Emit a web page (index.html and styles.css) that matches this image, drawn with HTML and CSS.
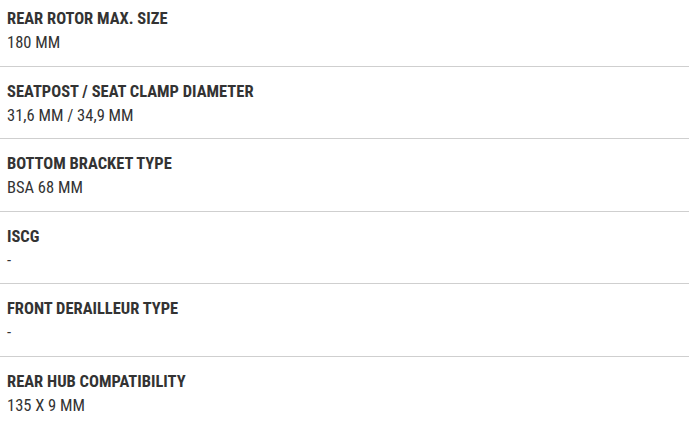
FILE: index.html
```html
<!DOCTYPE html>
<html>
<head>
<meta charset="utf-8">
<link rel="stylesheet" href="styles.css">
</head>
<body>
<div class="specs">
  <div class="row"><div class="label">REAR ROTOR MAX. SIZE</div><div class="value">180 MM</div></div>
  <div class="row"><div class="label">SEATPOST / SEAT CLAMP DIAMETER</div><div class="value">31,6 MM / 34,9 MM</div></div>
  <div class="row"><div class="label">BOTTOM BRACKET TYPE</div><div class="value">BSA 68 MM</div></div>
  <div class="row"><div class="label">ISCG</div><div class="value">-</div></div>
  <div class="row"><div class="label">FRONT DERAILLEUR TYPE</div><div class="value">-</div></div>
  <div class="row last"><div class="label">REAR HUB COMPATIBILITY</div><div class="value">135 X 9 MM</div></div>
</div>
</body>
</html>
```
FILE: styles.css
```css
html, body {
  margin: 0;
  padding: 0;
  background: #fff;
}
body {
  font-family: "Roboto Condensed", Roboto, "Liberation Sans", sans-serif;
  font-stretch: condensed;
  color: #333;
  font-size: 16.5px;
  line-height: 24px;
}
.specs {
  margin-top: -6px;
}
.row {
  padding: 13px 7px 10.5px;
  border-bottom: 1px solid #cfcfcf;
}
.row.last {
  border-bottom: none;
}
.label {
  font-weight: 700;
}
.value {
  font-weight: 400;
}
```
